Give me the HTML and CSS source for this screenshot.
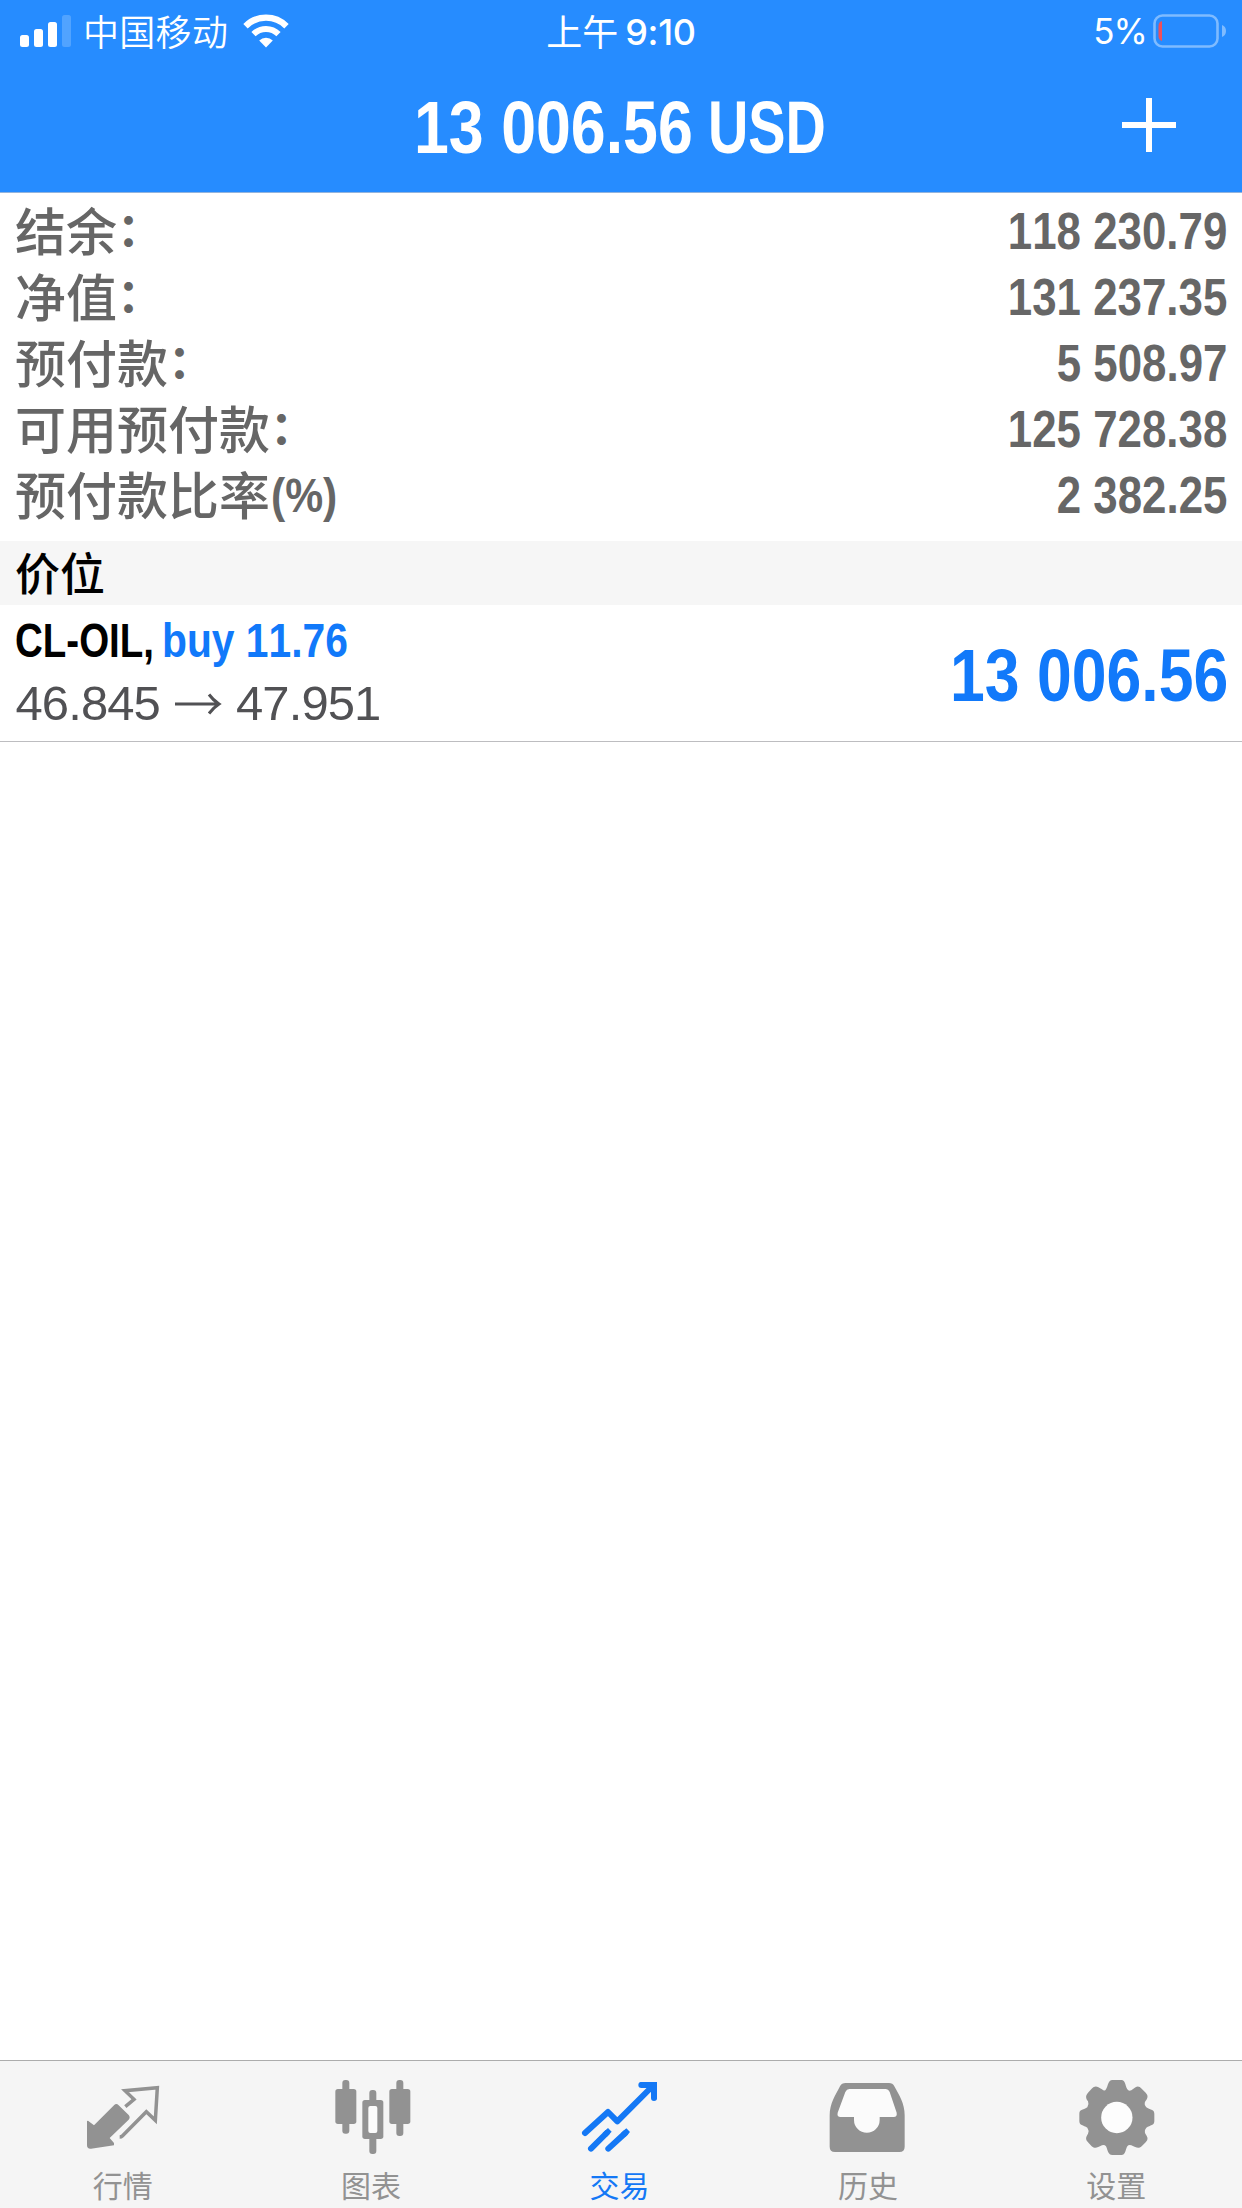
FILE: index.html
```html
<!DOCTYPE html>
<html lang="zh-CN">
<head>
<meta charset="utf-8">
<title>交易</title>
<link rel="stylesheet" href="styles.css">
</head>
<body>
<div class="app">
  <header class="header">
    <div class="status">
      <div class="status-left">
        <svg class="signal" width="52" height="33" viewBox="0 0 52 33" fill="#fff">
          <rect x="0" y="20" width="9" height="12" rx="2.5"/>
          <rect x="14" y="14" width="9" height="18" rx="2.5"/>
          <rect x="28" y="7" width="9" height="25" rx="2.5"/>
          <rect x="42" y="0" width="9" height="32" rx="2.5" opacity=".2"/>
        </svg>
        <span class="carrier">中国移动</span>
        <svg class="wifi" width="46" height="34" viewBox="0 0 46 34" fill="none" stroke="#fff">
          <path d="M2.5 12.2A29 29 0 0 1 43.5 12.2" stroke-width="6.2"/>
          <path d="M10.5 20.2A17.7 17.7 0 0 1 35.5 20.2" stroke-width="6"/>
          <path d="M16.2 26.6A9.8 9.8 0 0 1 29.8 26.6L23 33.4Z" fill="#fff" stroke="none"/>
        </svg>
      </div>
      <div class="clock"><span class="clock-half">上午</span><span class="clock-time">9:10</span></div>
      <div class="status-right">
        <span class="percent">5%</span>
        <svg width="74" height="34" viewBox="0 0 74 34">
          <rect x="1.5" y="1.5" width="63" height="31" rx="8" fill="none" stroke="#7fbbff" stroke-width="2.6"/>
          <path d="M9 7Q5.500 8 5.500 12V22Q5.500 26 9 27Z" fill="#f0505a"/>
          <path d="M69 11Q73 12.500 73 17T69 23Z" fill="#7fbbff"/>
        </svg>
      </div>
    </div>
    <div class="titlebar">
      <div class="title"><span class="cond total">13 006.56</span><span class="cond currency">USD</span></div>
      <svg class="plus" width="54" height="54" viewBox="0 0 54 54" stroke="#fff" stroke-width="6"><path d="M27 0V54M0 27H54"/></svg>
    </div>
  </header>

  <section class="summary">
    <div class="row"><span class="label">结余<span class="colon">：</span></span><span class="cond value">118 230.79</span></div>
    <div class="row"><span class="label">净值<span class="colon">：</span></span><span class="cond value">131 237.35</span></div>
    <div class="row"><span class="label">预付款<span class="colon">：</span></span><span class="cond value">5 508.97</span></div>
    <div class="row"><span class="label">可用预付款<span class="colon">：</span></span><span class="cond value">125 728.38</span></div>
    <div class="row"><span class="label">预付款比率<span class="cond unit">(%)</span></span><span class="cond value">2 382.25</span></div>
  </section>

  <h2 class="section">价位</h2>

  <article class="position">
    <div>
      <div class="deal"><span class="cond symbol">CL-OIL,</span><span class="cond side">buy 11.76</span></div>
      <div class="quote">
        <span>46.845</span>
        <svg width="45" height="22" viewBox="0 0 45 22" fill="none" stroke="#515154" stroke-width="3"><path d="M0 11H44M34 1.500Q38 7 44 11Q38 15 34 20.500"/></svg>
        <span>47.951</span>
      </div>
    </div>
    <span class="cond profit">13 006.56</span>
  </article>

  <nav class="tabs">
    <div class="tab">
      <svg width="80" height="80" viewBox="132 84 240 240">
        <path d="M144 212L162 226L222 166Q229 158 236 166L266 195Q272 202 266 209L209 264L222 279V286L153 296Q141 297 141 286V213Z" fill="#929292"/>
        <path d="M256 170L282 148L255 122L352 113L346 211L319 185L247 258Q244 261 239 261" fill="none" stroke="#929292" stroke-width="10.5"/>
      </svg>
      <span>行情</span>
    </div>
    <div class="tab">
      <svg width="80" height="80" viewBox="878 84 240 240" fill="#929292">
        <rect x="906" y="90" width="21" height="161" rx="9"/><rect x="885" y="117" width="63" height="105" rx="8"/>
        <rect x="1068" y="90" width="21" height="168" rx="9"/><rect x="1047" y="117" width="63" height="105" rx="8"/>
        <rect x="987" y="120" width="21" height="192" rx="9"/><rect x="966" y="150" width="63" height="117" rx="8"/>
        <rect x="984" y="168" width="27" height="81" rx="6" fill="#fbfbfb"/>
      </svg>
      <span>图表</span>
    </div>
    <div class="tab active">
      <svg width="80" height="80" viewBox="123 84 240 240" fill="none" stroke="#1478f5" stroke-width="18" stroke-linecap="round" stroke-linejoin="round">
        <path d="M135 249L204 186L232 214L338 108M304 105H342V144"/>
        <path d="M298 96H351V149L332 122L322 112Z" fill="#1478f5" stroke="none"/>
        <path d="M153 296L200 249M205 296L256 249"/>
        <path d="M188 249L204 234L215 245L200 261ZM244 248L259 235L270 246L256 261Z" fill="#1478f5" stroke="none"/>
      </svg>
      <span>交易</span>
    </div>
    <div class="tab">
      <svg width="80" height="80" viewBox="868 84 240 240">
        <path d="M918 99H1048Q1059 99 1064 109C1078 135 1095 160 1095 196V290Q1095 306 1079 306H886Q870 306 870 290V196C870 160 888 135 901 109Q906 99 918 99Z" fill="#929292"/>
        <path d="M929 117H1037Q1046 117 1050 126L1071 188Q1073 201 1062 201H1020V210A38 38 0 0 1 943 210V201H903Q891 201 894 188L917 126Q921 117 929 117Z" fill="#fbfbfb"/>
      </svg>
      <span>历史</span>
    </div>
    <div class="tab">
      <svg width="80" height="80" viewBox="167 84 240 240">
        <path d="M270 90H297C310 90 308 106 315 118Q319 125 327 121C343 108 348 106 358 116L370 128C379 138 376 144 369 154Q364 164 372 172C386 181 396 178 396 192V213C396 227 384 225 372 233Q365 241 369 251C378 264 377 268 370 277L358 289C348 297 342 293 327 286Q319 283 315 289C308 302 310 315 297 315H270C257 315 257 302 251 289Q246 283 239 286C224 293 219 297 208 289L197 277C190 268 189 264 197 251Q201 241 195 233C183 225 171 227 171 213V192C171 178 181 181 195 172Q201 164 197 154C190 144 189 138 197 128L208 116C218 106 224 108 239 118Q247 125 251 118C258 106 257 90 270 90Z" fill="#929292"/>
        <circle cx="283.5" cy="202.5" r="47" fill="#fdfdfd"/>
      </svg>
      <span>设置</span>
    </div>
  </nav>
</div>
</body>
</html>
```
FILE: styles.css
```css
* { box-sizing: border-box; }
body { margin: 0; background: #fff; font-family: "Liberation Sans", "Noto Sans CJK SC", sans-serif; }
svg { display: block; flex: none; overflow: visible; }
.app { width: 1242px; height: 2208px; display: flex; flex-direction: column; background: #fff; }

/* Condensed bold face: the regular-width bold, narrowed horizontally */
.cond { display: inline-block; flex: none; font-family: "Liberation Sans", sans-serif; font-weight: 700; font-kerning: none; white-space: nowrap; transform-origin: left center; }

.header { height: 193px; background: #268cff; border-bottom: 1px solid #93b4dd; color: #fff; }
.status { height: 64px; display: grid; grid-template-columns: 1fr auto 1fr; align-items: center; padding: 0 15px 0 20px; font-size: 36px; }
.status-left, .status-right { display: flex; align-items: center; }
.status-left { padding-bottom: 3px; }
.status-right { justify-content: flex-end; gap: 6px; padding-bottom: 4px; }
.carrier { font-family: "Noto Sans CJK SC", sans-serif; font-weight: 350; margin-left: 11px; letter-spacing: .3px; height: 61px; line-height: 59px; }
.wifi { margin-left: 15px; margin-bottom: 2px; }
.clock { display: flex; gap: 7px; padding-right: 5px; height: 64px; line-height: 63px; }
.clock-half { font-family: "Noto Sans CJK SC", sans-serif; font-weight: 400; line-height: 59px; }
.clock-time { font-family: Inter, sans-serif; font-weight: 500; letter-spacing: -.3px; }
.percent { font-family: Inter, sans-serif; font-weight: 400; font-size: 35px; letter-spacing: -1px; line-height: 62px; }
.titlebar { height: 128px; display: grid; grid-template-columns: 1fr auto 1fr; padding-top: 23px; }
.title { grid-column: 2; display: flex; width: 418px; height: 80px; padding-left: 2px; font-size: 74px; line-height: 81px; }
.total { transform: scaleX(.847); margin-right: -35px; }
.currency { transform: scaleX(.755); margin-right: -38px; }
.plus { grid-column: 3; justify-self: end; margin: 11px 66px 0 0; }

.summary { padding: 4px 15px 0; height: 348px; color: #666; }
.row { height: 66px; display: flex; justify-content: space-between; }
.label { display: flex; font-family: "Noto Sans CJK SC", sans-serif; font-size: 51px; font-weight: 500; line-height: 64px; }
.colon { font-size: 46px; font-weight: 700; line-height: 58px; }
.value { font-size: 52px; line-height: 69px; transform: scaleX(.843); transform-origin: right center; }
.unit { font-size: 49px; line-height: 69px; margin-left: 1px; transform: scaleX(.87); }

.section { margin: 0; height: 64px; padding-left: 15px; background: #f6f6f6; color: #000; font-family: "Noto Sans CJK SC", sans-serif; font-size: 45px; font-weight: 500; line-height: 62px; }
.position { height: 137px; padding: 0 14px; display: flex; justify-content: space-between; border-bottom: 1px solid #bdbdc0; color: #000; }
.deal { display: flex; height: 66px; font-size: 48px; line-height: 71px; padding-left: 1px; }
.symbol { transform: scaleX(.802); margin-right: -26px; }
.side { transform: scaleX(.85); margin-right: -32px; color: #1179fa; }
.quote { display: flex; align-items: center; gap: 15.5px; height: 66px; padding-left: 1.5px; color: #515154; font-size: 49px; letter-spacing: -.9px; line-height: 64px; }
.quote span { height: 66px; }
.profit { height: 80px; margin-top: 30px; color: #1179fa; font-size: 74px; line-height: 81px; transform: scaleX(.845); transform-origin: right center; }

.tabs { margin-top: auto; height: 148px; padding-top: 17px; display: grid; grid-template-columns: repeat(5, 1fr); background: #f5f5f5; border-top: 1px solid #acacac; color: #929292; font-family: "Noto Sans CJK SC", sans-serif; font-size: 30px; line-height: 40px; }
.tab { display: flex; flex-direction: column; align-items: center; gap: 6px; }
.tab span { padding-right: 3px; }
.active { color: #1478f5; }
```
